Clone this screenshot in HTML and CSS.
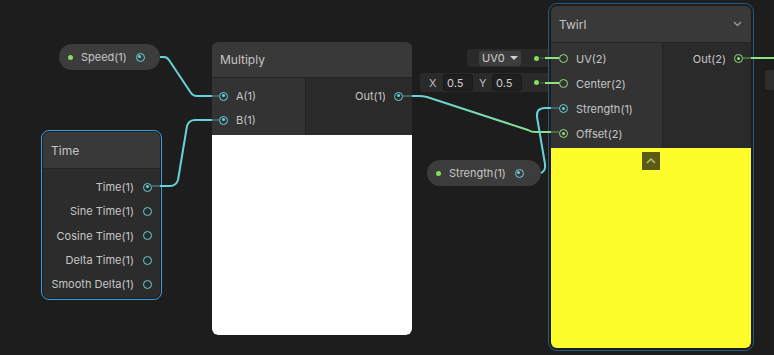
FILE: index.html
```html
<!DOCTYPE html>
<html lang="en">
<head>
  <meta charset="UTF-8" />
  <title>Shader Graph</title>
  <link rel="stylesheet" href="styles.css">
</head>
<body>
  <div class="graph">

    <div class="pill speed">
      <span class="dot"></span>
      <span class="pill-label">Speed(1)</span>
      <span class="port cyan on"></span>
    </div>

    <div class="pill strength">
      <span class="dot"></span>
      <span class="pill-label">Strength(1)</span>
      <span class="port cyan on"></span>
    </div>

    <div class="node time selected">
      <div class="node-title">Time</div>
      <div class="ports">
        <div class="outputs">
          <div class="slot">Time(1) <span class="port cyan on"></span></div>
          <div class="slot">Sine Time(1) <span class="port cyan"></span></div>
          <div class="slot">Cosine Time(1) <span class="port cyan"></span></div>
          <div class="slot">Delta Time(1) <span class="port cyan"></span></div>
          <div class="slot">Smooth Delta(1) <span class="port cyan"></span></div>
        </div>
      </div>
    </div>

    <div class="node multiply">
      <div class="node-title">Multiply</div>
      <div class="ports">
        <div class="inputs">
          <div class="slot"><span class="port cyan on"></span> A(1)</div>
          <div class="slot"><span class="port cyan on"></span> B(1)</div>
        </div>
        <div class="outputs">
          <div class="slot">Out(1) <span class="port cyan on"></span></div>
        </div>
      </div>
      <div class="preview white"></div>
    </div>

    <div class="field uv-field">
      <div class="dropdown">UV0 <span class="caret"></span></div>
      <span class="dot"></span>
    </div>

    <div class="field xy-field">
      <span class="axis">X</span>
      <span class="num">0.5</span>
      <span class="axis">Y</span>
      <span class="num">0.5</span>
      <span class="dot"></span>
    </div>

    <div class="node twirl hovered">
      <div class="node-title">
        Twirl
        <svg class="chev" width="9" height="6" viewBox="0 0 9 6"><polyline points="1,1 4.5,4.5 8,1" fill="none" stroke="#9a9a9a" stroke-width="1.3"/></svg>
      </div>
      <div class="ports">
        <div class="inputs">
          <div class="slot"><span class="port green"></span> UV(2)</div>
          <div class="slot"><span class="port green"></span> Center(2)</div>
          <div class="slot"><span class="port cyan on"></span> Strength(1)</div>
          <div class="slot"><span class="port green on"></span> Offset(2)</div>
        </div>
        <div class="outputs">
          <div class="slot">Out(2) <span class="port green on"></span></div>
        </div>
      </div>
      <div class="preview yellow">
        <div class="collapse">
          <svg width="10" height="6" viewBox="0 0 10 6"><polyline points="1,5 5,1 9,5" fill="none" stroke="#bdb96c" stroke-width="1.6"/></svg>
        </div>
      </div>
    </div>

    <div class="edge-node"></div>

    <svg class="wires" width="774" height="355" viewBox="0 0 774 355">
      <defs>
        <linearGradient id="outToOffset" gradientUnits="userSpaceOnUse" x1="412" y1="0" x2="560" y2="0">
          <stop offset="0" stop-color="#66d2da"/>
          <stop offset="1" stop-color="#8fe27c"/>
        </linearGradient>
      </defs>
      <!-- stubs inside nodes -->
      <g stroke-width="2" fill="none">
        <path d="M212 96 L219 96 M212 120 L219 120" stroke="#3f6466"/>
        <path d="M152 186 L160 186" stroke="#3f6466"/>
        <path d="M403 96 L412 96" stroke="#3f6466"/>
        <path d="M551 108 L559 108" stroke="#3f6466"/>
        <path d="M551 132 L559 132" stroke="#4a6a44"/>
        <path d="M743 58 L751 58" stroke="#4a6a44"/>
        <path d="M540 58 L545 58 M540 83 L545 83" stroke="#3a4a38"/>
      </g>
      <g stroke-width="2" fill="none" stroke-linejoin="round">
        <path d="M160 57 L164 57 Q167 57 169 60 L191 93 Q193 96 197 96 L212 96" stroke="#66d2da"/>
        <path d="M160 186 L170 186 Q176 186 178 180 L187 126 Q189 120 195 120 L212 120" stroke="#66d2da"/>
        <path d="M412 96 L419 96 Q423 96 427 97 L528 130 Q531 132 536 132 L551 132" stroke="url(#outToOffset)"/>
        <path d="M541 173 Q546 171 545 164 L537 117 Q536 108 545 108 L551 108" stroke="#66d2da"/>
        <path d="M545 58 L559 58 M545 83 L559 83" stroke="#8fe27c"/>
        <path d="M751 58 L774 58" stroke="#8fe27c"/>
      </g>
    </svg>
  </div>
</body>
</html>
```
FILE: styles.css
```css
* {
  box-sizing: border-box;
}
body {
  margin: 0;
  background: #1d1d1d;
  font-family: Inter, "Noto Sans", sans-serif;
  font-size: 11px;
  color: #c6c6c6;
}
.graph {
  position: relative;
  width: 774px;
  height: 355px;
  overflow: hidden;
}
.wires {
  position: absolute;
  left: 0;
  top: 0;
  pointer-events: none;
}

/* ports */
.port {
  position: relative;
  flex: none;
  width: 9px;
  height: 9px;
  border-radius: 50%;
  border: 1.5px solid;
}
.port.cyan {
  border-color: #66d2da;
}
.port.green {
  border-color: #8fe27c;
}
.port.on::after {
  content: "";
  position: absolute;
  left: 1.5px;
  top: 1.5px;
  width: 3px;
  height: 3px;
  border-radius: 50%;
}
.port.cyan.on::after {
  background: #66d2da;
}
.port.green.on::after {
  background: #8fe27c;
}
.dot {
  flex: none;
  width: 5px;
  height: 5px;
  border-radius: 50%;
  background: #84dc5c;
}

/* property pills */
.pill {
  position: absolute;
  display: flex;
  align-items: center;
  height: 26px;
  padding: 0 0 0 9px;
  border-radius: 13px;
  background: #3c3c3c;
}
.pill .pill-label {
  margin-left: 8px;
  margin-right: 9px;
}
.speed {
  left: 59px;
  top: 44px;
  width: 101px;
}
.strength {
  left: 427px;
  top: 160px;
  width: 114px;
}

/* nodes */
.node {
  position: absolute;
  width: 200px;
  border-radius: 6px;
  background: #2a2a2a;
  overflow: hidden;
}
.node.selected {
  outline: 1px solid #3a9de4;
  outline-offset: 1px;
}
.node.hovered {
  overflow: visible;
  outline: 1px solid #215a82;
  outline-offset: 2px;
}
.node-title {
  display: flex;
  align-items: center;
  justify-content: space-between;
  height: 36px;
  padding: 0 9px 0 8px;
  background: #393939;
  border-bottom: 1px solid #242424;
  border-radius: 6px 6px 0 0;
  font-size: 12px;
  color: #c4c4c4;
}
.ports {
  display: flex;
}
.inputs {
  width: 94px;
  padding: 6px 0 3px;
  background: #333333;
  border-right: 1px solid #242424;
}
.outputs {
  flex: 1;
  padding: 6px 0 3px;
}
.slot {
  display: flex;
  align-items: center;
  gap: 8px;
  height: 24px;
  padding: 0 7px;
  white-space: nowrap;
}
.outputs .slot {
  justify-content: flex-end;
  gap: 8px;
  padding-right: 9px;
}
.preview {
  height: 200px;
  border-radius: 0 0 6px 6px;
}
.preview.white {
  background: #ffffff;
}
.preview.yellow {
  display: flex;
  justify-content: center;
  padding-top: 4px;
  background: #fdfd2b;
}
.collapse {
  display: flex;
  align-items: center;
  justify-content: center;
  width: 18px;
  height: 18px;
  background: #5c5a17;
}

.multiply {
  left: 212px;
  top: 42px;
}

.time {
  left: 43px;
  top: 132px;
  width: 117px;
  background: #2c2c2c;
}
.time .node-title {
  height: 37px;
}
.time .outputs {
  padding: 6px 0 2px;
}
.time .slot {
  height: 24.3px;
  padding-right: 8px;
  gap: 9px;
}

.twirl {
  left: 551px;
  top: 6px;
}
.twirl .node-title {
  height: 37px;
}
.twirl .inputs {
  width: 112px;
  padding: 3px 0 2px;
}
.twirl .inputs .slot {
  height: 25px;
  padding-left: 8px;
}
.twirl .outputs {
  padding: 3px 0 2px;
}
.twirl .outputs .slot {
  height: 25px;
  padding-right: 8px;
}

/* inline input fields */
.field {
  position: absolute;
  display: flex;
  align-items: center;
  background: #2a2a2a;
  border-radius: 3px 0 0 3px;
}
.field .dot {
  margin-left: auto;
  margin-right: 9px;
}
.uv-field {
  left: 467px;
  top: 49px;
  width: 81px;
  height: 18px;
  padding-left: 12px;
}
.dropdown {
  display: flex;
  align-items: center;
  gap: 5px;
  height: 15px;
  width: 42px;
  padding-left: 3px;
  border-radius: 3px;
  background: #3d3d3d;
  color: #cfcfcf;
}
.caret {
  width: 0;
  height: 0;
  border-left: 4px solid transparent;
  border-right: 4px solid transparent;
  border-top: 4px solid #d0d0d0;
}
.xy-field {
  left: 420px;
  top: 73px;
  width: 128px;
  height: 19px;
  padding-left: 9px;
}
.axis {
  width: 14px;
  color: #bcbcbc;
}
.axis + .num + .axis {
  margin-left: 6px;
  width: 13px;
}
.num {
  display: flex;
  align-items: center;
  width: 30px;
  height: 17px;
  padding-left: 3px;
  background: #1f1f1f;
  border: 1px solid #191919;
  border-radius: 3px;
  color: #d0d0d0;
}

.edge-node {
  position: absolute;
  left: 765px;
  top: 70px;
  width: 20px;
  height: 20px;
  background: #2d2d2d;
  border-radius: 3px;
}
```
